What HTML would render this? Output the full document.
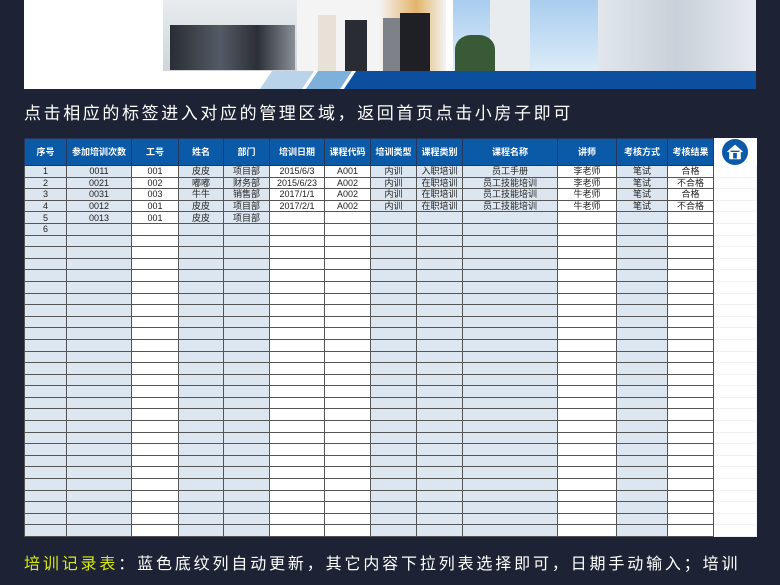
<!DOCTYPE html>
<html><head><meta charset="utf-8"><style>
body{margin:0;width:780px;height:585px;background:#1d2234;position:relative;overflow:hidden;font-family:"Liberation Sans","Noto Sans CJK SC",sans-serif}
.abs{position:absolute}
table{border-collapse:collapse;table-layout:fixed;position:absolute;left:24px;top:138px}
td,th{border:1px solid #555;padding:0;font-size:9px;text-align:center;line-height:10px;overflow:hidden;white-space:nowrap;color:#222}
th{background:#0b5aa8;color:#fff;height:26px;font-size:9px;font-weight:bold;border-color:#26355a}
td{height:10.6px}
.s{background:#dce6f0}
.w{background:#fff}
.x{background:#fff;border-color:#eef0f3}
</style></head><body>
<div class="abs" style="left:24px;top:0;width:732px;height:89px;background:#fff"></div>
<div class="abs" style="left:163px;top:0;width:134px;height:71px;background:linear-gradient(#e8ecef,#cfd5da)"></div>
<div class="abs" style="left:170px;top:25px;width:125px;height:45px;background:linear-gradient(90deg,#2a2d33,#545a66 40%,#2c2f36 70%,#8a8f98)"></div>
<div class="abs" style="left:297px;top:0;width:149px;height:71px;background:linear-gradient(90deg,#f4f4f4 55%,#e4b46a 80%,#f3f3f3)"></div>
<div class="abs" style="left:318px;top:15px;width:18px;height:56px;background:#e7e1d8"></div>
<div class="abs" style="left:345px;top:20px;width:22px;height:51px;background:#2a2c33"></div>
<div class="abs" style="left:383px;top:18px;width:20px;height:53px;background:#7e8187"></div>
<div class="abs" style="left:400px;top:13px;width:30px;height:58px;background:#1e2026"></div>
<div class="abs" style="left:453px;top:0;width:145px;height:71px;background:linear-gradient(#a9cdee,#dcecf8)"></div>
<div class="abs" style="left:490px;top:0;width:40px;height:71px;background:#e9ecef"></div>
<div class="abs" style="left:455px;top:35px;width:40px;height:36px;background:#385a36;border-radius:40% 40% 0 0"></div>
<div class="abs" style="left:598px;top:0;width:158px;height:71px;background:linear-gradient(90deg,#e1e6ec,#c8d0d9,#e7ebf0)"></div>
<svg class="abs" style="left:24px;top:71px" width="732" height="18"><polygon points="236,18 248,0 290,0 278,18" fill="#b8d3ea"/><polygon points="282,18 294,0 328,0 316,18" fill="#7eb0dc"/><polygon points="320,18 332,0 732,0 732,18" fill="#0c4f9e"/></svg>
<div class="abs" style="left:24px;top:99px;color:#fff;font-size:17px;letter-spacing:2.6px;white-space:nowrap">点击相应的标签进入对应的管理区域，返回首页点击小房子即可</div>
<table>
<colgroup><col style="width:42px"><col style="width:65px"><col style="width:47px"><col style="width:45px"><col style="width:46px"><col style="width:55px"><col style="width:46px"><col style="width:46px"><col style="width:46px"><col style="width:95px"><col style="width:59px"><col style="width:51px"><col style="width:46px"><col style="width:43px"></colgroup>
<tr><th>序号</th><th>参加培训次数</th><th>工号</th><th>姓名</th><th>部门</th><th>培训日期</th><th>课程代码</th><th>培训类型</th><th>课程类别</th><th>课程名称</th><th>讲师</th><th>考核方式</th><th>考核结果</th><th style="background:#fff;border-color:#fff"><svg width="26" height="26" viewBox="0 0 28 28" style="display:block;margin:0 auto"><circle cx="14" cy="14" r="14" fill="#0b5aa8"/><path d="M6 14 L14 7 L22 14 M8.5 12.5 V21 H19.5 V12.5" fill="#fff" stroke="#fff" stroke-width="1.5"/><rect x="12" y="15" width="4" height="6" fill="#0b5aa8"/></svg></th></tr>
<tr><td class="s">1</td><td class="s">0011</td><td class="w">001</td><td class="s">皮皮</td><td class="s">项目部</td><td class="w">2015/6/3</td><td class="w">A001</td><td class="s">内训</td><td class="s">入职培训</td><td class="s">员工手册</td><td class="w">李老师</td><td class="s">笔试</td><td class="w">合格</td><td class="x"></td></tr>
<tr><td class="s">2</td><td class="s">0021</td><td class="w">002</td><td class="s">嘟嘟</td><td class="s">财务部</td><td class="w">2015/6/23</td><td class="w">A002</td><td class="s">内训</td><td class="s">在职培训</td><td class="s">员工技能培训</td><td class="w">李老师</td><td class="s">笔试</td><td class="w">不合格</td><td class="x"></td></tr>
<tr><td class="s">3</td><td class="s">0031</td><td class="w">003</td><td class="s">牛牛</td><td class="s">销售部</td><td class="w">2017/1/1</td><td class="w">A002</td><td class="s">内训</td><td class="s">在职培训</td><td class="s">员工技能培训</td><td class="w">牛老师</td><td class="s">笔试</td><td class="w">合格</td><td class="x"></td></tr>
<tr><td class="s">4</td><td class="s">0012</td><td class="w">001</td><td class="s">皮皮</td><td class="s">项目部</td><td class="w">2017/2/1</td><td class="w">A002</td><td class="s">内训</td><td class="s">在职培训</td><td class="s">员工技能培训</td><td class="w">牛老师</td><td class="s">笔试</td><td class="w">不合格</td><td class="x"></td></tr>
<tr><td class="s">5</td><td class="s">0013</td><td class="w">001</td><td class="s">皮皮</td><td class="s">项目部</td><td class="w"></td><td class="w"></td><td class="s"></td><td class="s"></td><td class="s"></td><td class="w"></td><td class="s"></td><td class="w"></td><td class="x"></td></tr>
<tr><td class="s">6</td><td class="s"></td><td class="w"></td><td class="s"></td><td class="s"></td><td class="w"></td><td class="w"></td><td class="s"></td><td class="s"></td><td class="s"></td><td class="w"></td><td class="s"></td><td class="w"></td><td class="x"></td></tr>
<script>document.write(('<tr><td class="s"></td><td class="s"></td><td class="w"></td><td class="s"></td><td class="s"></td><td class="w"></td><td class="w"></td><td class="s"></td><td class="s"></td><td class="s"></td><td class="w"></td><td class="s"></td><td class="w"></td><td class="x"></td></tr>').repeat(26));</script>
</table>
<div class="abs" style="left:24px;top:550px;color:#fff;font-size:16px;letter-spacing:2.85px;white-space:nowrap"><span style="color:#d6e81a">培训记录表</span>：蓝色底纹列自动更新，其它内容下拉列表选择即可，日期手动输入；培训</div>
</body></html>
